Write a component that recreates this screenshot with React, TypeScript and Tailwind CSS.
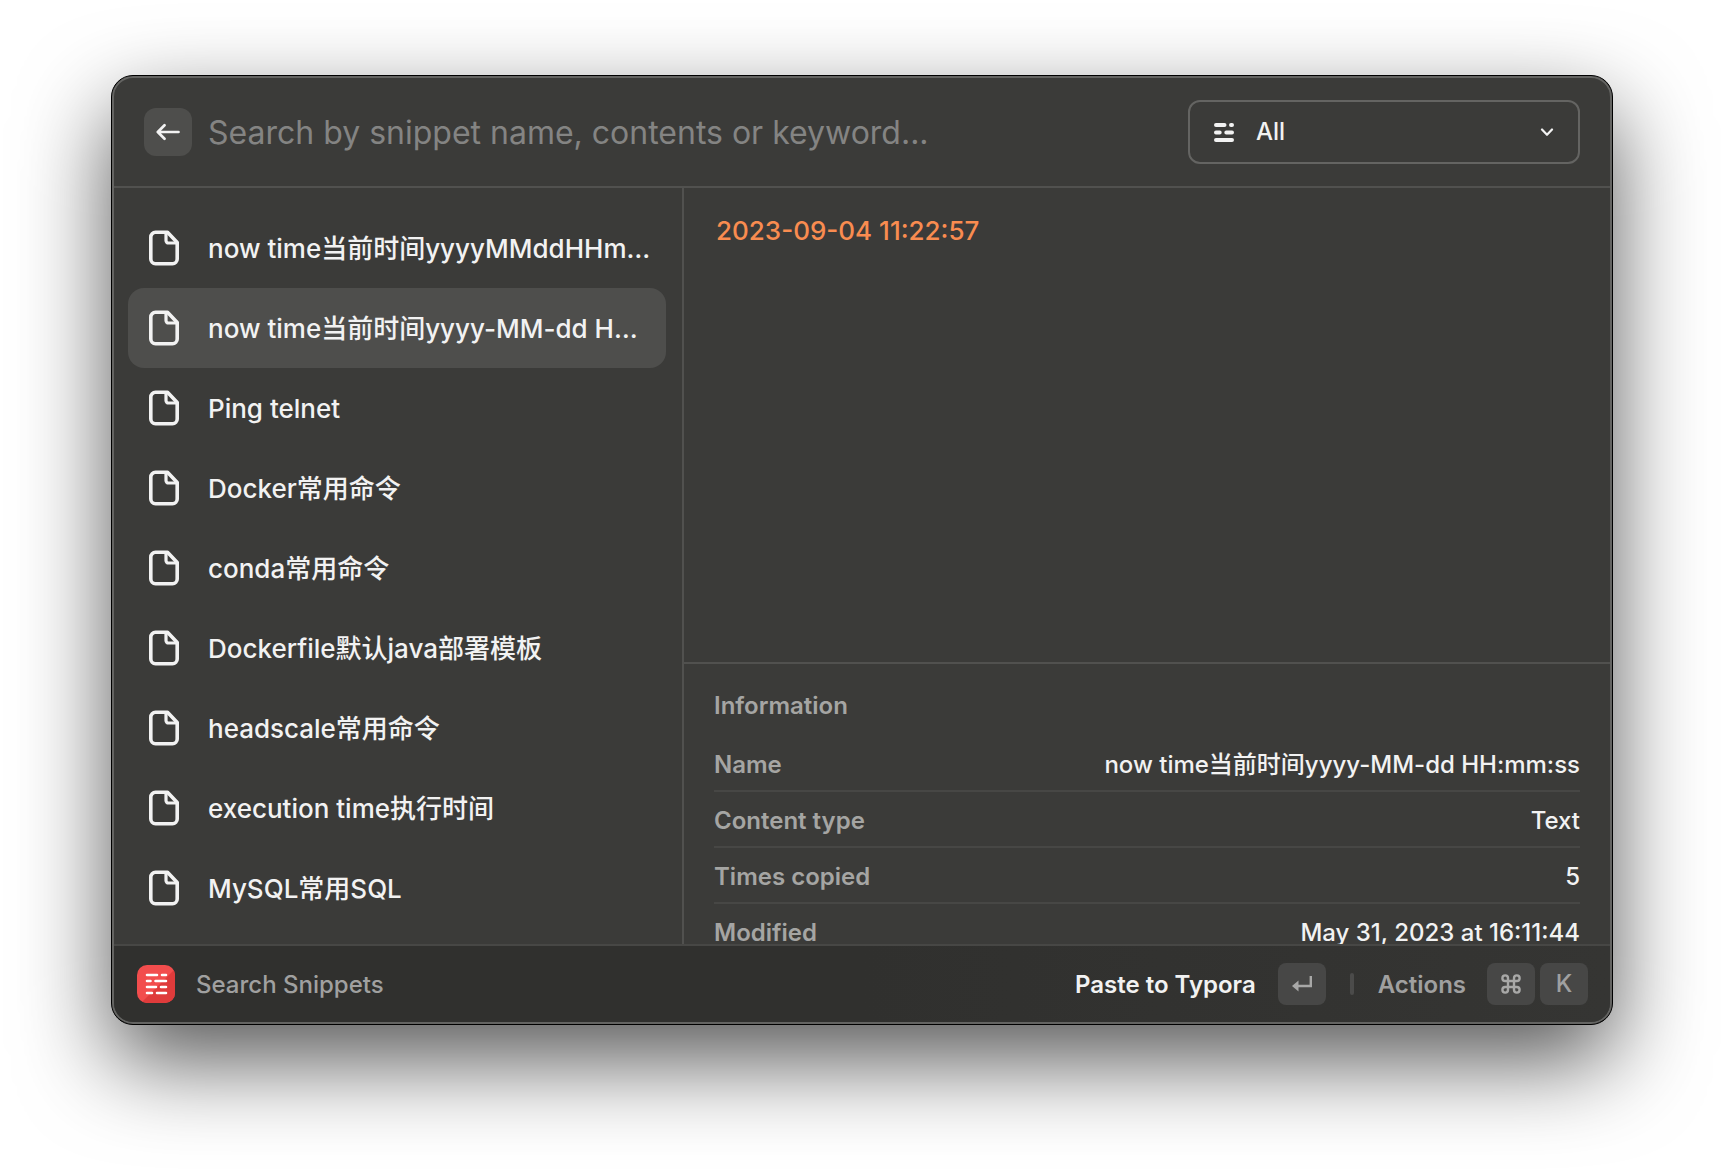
import { useState } from "react";

const snippets = [
  "now time当前时间yyyyMMddHHmmss",
  "now time当前时间yyyy-MM-dd HH:mm:ss",
  "Ping telnet",
  "Docker常用命令",
  "conda常用命令",
  "Dockerfile默认java部署模板",
  "headscale常用命令",
  "execution time执行时间",
  "MySQL常用SQL",
];

const details = [
  ["Name", "now time当前时间yyyy-MM-dd HH:mm:ss"],
  ["Content type", "Text"],
  ["Times copied", "5"],
  ["Modified", "May 31, 2023 at 16:11:44"],
];

function BackIcon() {
  return (
    <svg width="24" height="18" viewBox="0 0 24 18" fill="none" stroke="#f2f2f2" strokeWidth="2.700" strokeLinecap="round" strokeLinejoin="round" aria-hidden="true">
      <path d="M22.500 9H2M8.500 2.300L1.800 9l6.700 6.700" />
    </svg>
  );
}

function FileIcon() {
  return (
    <svg className="shrink-0" width="30" height="36" viewBox="0 0 30 36" fill="none" stroke="#f2f2f2" strokeWidth="3.600" strokeLinejoin="round" aria-hidden="true">
      <path d="M6.500 2.300H18.500L28.200 12.500V29a4.700 4.700 0 0 1-4.700 4.700H6.500A4.700 4.700 0 0 1 1.800 29V7a4.700 4.700 0 0 1 4.700-4.700Z" />
      <path d="M17 3v7.500a2.500 2.500 0 0 0 2.500 2.500H28" strokeWidth="3.200" />
    </svg>
  );
}

function FilterIcon() {
  return (
    <svg width="20" height="19" viewBox="0 0 20 19" stroke="#f2f2f2" strokeWidth="4" strokeLinecap="round" aria-hidden="true">
      <path d="M2 2H10.500M17 2H18M2 9.500H5.700M12.300 9.500H18M2 17H18" />
    </svg>
  );
}

function ChevronIcon() {
  return (
    <svg width="14" height="9" viewBox="0 0 14 9" fill="none" stroke="#f2f2f2" strokeWidth="2.200" strokeLinecap="round" strokeLinejoin="round" aria-hidden="true">
      <path d="M2 1.500l5 5.300 5-5.300" />
    </svg>
  );
}

function SnippetsLogo() {
  return (
    <svg width="38" height="38" viewBox="0 0 38 38" aria-hidden="true">
      <defs>
        <clipPath id="logo-clip">
          <rect width="38" height="38" rx="10" />
        </clipPath>
      </defs>
      <g clipPath="url(#logo-clip)">
        <rect width="38" height="38" fill="#f24d4d" />
        <path d="M38 4V38H4Z" fill="#df3b3b" />
      </g>
      <path d="M10 10H20M25 10H29M10 16H13.500M18.500 16H29M10 22H19M24 22H29M10 28H15M20 28H29" stroke="#fff" strokeWidth="2.600" strokeLinecap="round" />
    </svg>
  );
}

function ReturnIcon() {
  return (
    <svg width="20" height="17" viewBox="0 0 20 17" fill="none" aria-hidden="true">
      <path d="M18.800 0V10H5" stroke="#a8a8a7" strokeWidth="2.400" />
      <path d="M0 10L6.500 4.500V15.500Z" fill="#a8a8a7" />
    </svg>
  );
}

function CommandIcon() {
  return (
    <svg width="20" height="20" viewBox="0 0 20 20" fill="none" stroke="#a8a8a7" strokeWidth="2.400" aria-hidden="true">
      <path d="M7 7V4.200A2.800 2.800 0 1 0 4.200 7H15.800A2.800 2.800 0 1 0 13 4.200V15.800A2.800 2.800 0 1 0 15.800 13H4.200A2.800 2.800 0 1 0 7 15.800Z" />
    </svg>
  );
}

export default function App() {
  const [selected, setSelected] = useState(1);
  return (
    <div className="min-h-screen overflow-hidden bg-white px-[111px] pt-[75px] pb-36 font-['Inter','Noto_Sans_CJK_SC',sans-serif] text-[#f2f2f2]">
      <div className="rounded-[22px] border border-black bg-black shadow-[0_36px_90px_rgba(0,0,0,0.66)]">
        <main className="overflow-hidden rounded-[21px] border-2 border-[#646462] bg-[#3b3b39]">
          <header className="flex h-[110px] items-center border-b-2 border-[#51514f] pr-[30px] pl-[30px]">
            <button aria-label="Back" className="flex size-12 shrink-0 items-center justify-center rounded-xl bg-[#4e4e4c]">
              <BackIcon />
            </button>
            <input
              aria-label="Search snippets"
              placeholder="Search by snippet name, contents or keyword..."
              className="ml-4 h-12 min-w-0 flex-1 bg-transparent pt-0.5 text-[32px] outline-none placeholder:text-[#848483]"
            />
            <div className="relative ml-6 w-[392px] shrink-0">
              <select aria-label="Filter" className="h-16 w-full appearance-none rounded-xl border-2 border-[#646462] bg-transparent pl-[66px] text-2xl font-medium outline-none">
                <option>All</option>
              </select>
              <div className="pointer-events-none absolute inset-0 flex items-center justify-between px-[26px]">
                <FilterIcon />
                <ChevronIcon />
              </div>
            </div>
          </header>

          <div className="flex">
            <nav aria-label="Snippets" className="w-[568px] shrink-0 px-[14px] pt-5 pb-4">
              {snippets.map((name, i) => (
                <button
                  key={name}
                  onClick={() => setSelected(i)}
                  className={`flex h-20 w-[538px] items-center gap-[29px] rounded-2xl pr-3 pl-[21px] text-left text-[26px] font-medium ${i === selected ? "bg-[#4e4e4c]" : ""}`}
                >
                  <FileIcon />
                  <span className="min-w-0 flex-1 truncate">{name}</span>
                </button>
              ))}
            </nav>

            <section className="flex min-w-0 flex-1 flex-col border-l-2 border-[#51514f]">
              <p className="flex-1 px-8 pt-6 text-[26px] leading-[38px] font-medium text-[#f98c50]">2023-09-04 11:22:57</p>
              <div className="h-[282px] overflow-hidden border-t-2 border-[#51514f] pr-[30px] pl-[30px] text-2xl font-medium">
                <h2 className="pt-5 pb-2 leading-11 font-semibold text-[#a5a5a3]">Information</h2>
                <dl>
                  {details.map(([label, value]) => (
                    <div key={label} className="flex h-14 items-center justify-between border-b-2 border-[#474745] pt-1 leading-9">
                      <dt className="font-semibold text-[#a5a5a3]">{label}</dt>
                      <dd>{value}</dd>
                    </div>
                  ))}
                </dl>
              </div>
            </section>
          </div>

          <footer className="flex h-[78px] items-center border-t-2 border-[#474745] bg-linear-to-r from-[#30302e] from-50% to-[#353533] pr-[22px] pl-[23px] text-2xl font-medium text-[#a0a0a0]">
            <SnippetsLogo />
            <span className="ml-[21px] flex-1 pt-0.5">Search Snippets</span>
            <button className="flex items-center gap-[22px] font-semibold text-[#f2f2f2]">
              <span className="pt-0.5">Paste to Typora</span>
              <kbd className="flex h-[42px] w-12 items-center justify-center rounded-lg bg-[#474746]">
                <ReturnIcon />
              </kbd>
            </button>
            <span className="mx-6 h-[22px] w-1 rounded-full bg-[#4b4b4a]" />
            <button className="flex items-center font-semibold">
              <span className="pt-0.5">Actions</span>
              <kbd className="ml-[21px] flex h-[42px] w-12 items-center justify-center rounded-lg bg-[#474746]">
                <CommandIcon />
              </kbd>
              <kbd className="ml-[5px] flex h-[42px] w-12 items-center justify-center rounded-lg bg-[#474746] font-['Inter',sans-serif] font-medium">
                K
              </kbd>
            </button>
          </footer>
        </main>
      </div>
    </div>
  );
}
